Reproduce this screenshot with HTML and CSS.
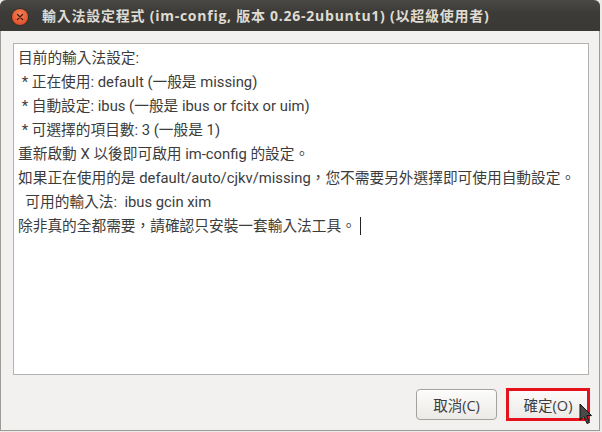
FILE: index.html
```html
<!DOCTYPE html>
<html>
<head>
<meta charset="utf-8">
<link rel="stylesheet" href="styles.css">
</head>
<body>
<div class="window">
  <div class="titlebar">
    <div class="close"><svg width="16" height="16" viewBox="0 0 16 16"><path d="M5.5 5.5 L10.5 10.5 M10.5 5.5 L5.5 10.5" stroke="#3b1f12" stroke-width="1.4" stroke-linecap="round"/></svg></div>
    <div class="title">輸入法設定程式 (im-config, 版本 0.26-2ubuntu1) (以超級使用者)</div>
  </div>
  <div class="body">
    <div class="textbox">
      <div class="line">目前的輸入法設定<span class="en">:</span></div>
      <div class="line"><span class="en"> * </span>正在使用<span class="en">: default (</span>一般是<span class="en"> missing)</span></div>
      <div class="line"><span class="en"> * </span>自動設定<span class="en">: ibus (</span>一般是<span class="en"> ibus or fcitx or uim)</span></div>
      <div class="line"><span class="en"> * </span>可選擇的項目數<span class="en">: 3 (</span>一般是<span class="en"> 1)</span></div>
      <div class="line">重新啟動<span class="en"> X </span>以後即可啟用<span class="en"> im-config </span>的設定。</div>
      <div class="line">如果正在使用的是<span class="en"> default/auto/cjkv/missing</span>，您不需要另外選擇即可使用自動設定。</div>
      <div class="line"><span class="en">  </span>可用的輸入法<span class="en">:  ibus gcin xim</span></div>
      <div class="line">除非真的全都需要，請確認只安裝一套輸入法工具。<span class="en"> </span><span class="caret"></span></div>
    </div>
    <div class="buttons">
      <div class="btn cancel">取消(C)</div>
      <div class="btn ok">確定(O)
        <svg class="pointer" width="14" height="22" viewBox="0 0 14 22"><path d="M1 1 L1 17 L5 13.5 L8 20.5 L10.5 19.5 L7.6 12.6 L12.5 12.6 Z" fill="#4a4a4a" stroke="#111" stroke-width="1" stroke-linejoin="round"/></svg>
      </div>
    </div>
  </div>
</div>
</body>
</html>
```
FILE: styles.css
```css
html, body {
  margin: 0;
  padding: 0;
  background: #ecebe9;
}
body {
  font-family: "Open Sans", "Noto Sans CJK TC", sans-serif;
  width: 602px;
  height: 432px;
  overflow: hidden;
}
.window {
  width: 600px;
  height: 431px;
  box-sizing: border-box;
  border: 1px solid #9d9b96;
  border-top: none;
  border-radius: 6px 6px 0 0;
  background: #f2f1f0;
  display: flex;
  flex-direction: column;
}
.titlebar {
  height: 31px;
  flex: none;
  margin: 0 -1px;
  background: linear-gradient(#4a4945, #3c3b37 40%, #3a3935);
  border-radius: 6px 6px 0 0;
  display: flex;
  align-items: center;
}
.close {
  width: 16px;
  height: 16px;
  margin-left: 12px;
  margin-top: 2px;
  border-radius: 50%;
  background: radial-gradient(circle at 50% 35%, #f7845a, #e4532a 70%, #c8401c);
  box-shadow: 0 0 0 1px rgba(0,0,0,0.25);
  display: flex;
}
.title {
  margin-left: 14px;
  margin-top: -1px;
  color: #dfdbd2;
  font-weight: bold;
  font-size: 14px;
  letter-spacing: 0.75px;
  white-space: nowrap;
}
.body {
  flex: 1;
  display: flex;
  flex-direction: column;
  padding: 12px 10px 0 12px;
}
.textbox {
  height: 332px;
  box-sizing: border-box;
  background: #fff;
  border: 1px solid #b5b3af;
  padding: 1px 4px;
  color: #3c3c3c;
  font-family: "Noto Sans CJK TC", sans-serif;
  font-size: 14.7px;
}
.line {
  height: 24px;
  line-height: 24px;
  white-space: pre;
}
.en {
  font-family: "Roboto", "Noto Sans CJK TC", sans-serif;
  font-size: 14.8px;
}
.caret {
  display: inline-block;
  width: 1px;
  height: 18px;
  background: #222;
  vertical-align: -4px;
}
.buttons {
  display: flex;
  justify-content: flex-end;
  align-items: center;
  gap: 9px;
  margin-top: 13px;
  margin-right: -1px;
}
.btn {
  display: flex;
  align-items: center;
  justify-content: center;
  font-size: 14.5px;
  color: #3c3c3c;
  box-sizing: border-box;
  position: relative;
}
.cancel {
  width: 81px;
  height: 31px;
  border: 1px solid #a5a29e;
  border-radius: 4px;
  background: linear-gradient(#fcfcfb, #eceae7);
  box-shadow: inset 0 1px 0 #fff;
}
.ok {
  width: 84px;
  height: 33px;
  border: 3px solid #e5121b;
  background: linear-gradient(#fbfbfa, #edebe8);
}
.pointer {
  position: absolute;
  left: 70px;
  top: 12px;
}
```
